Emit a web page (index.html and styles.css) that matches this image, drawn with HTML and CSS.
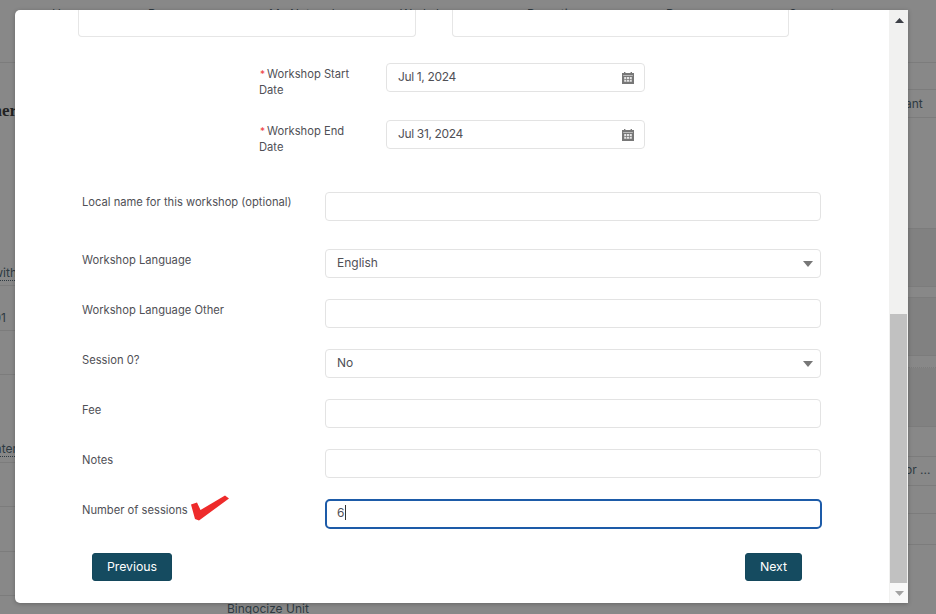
FILE: index.html
```html
<!DOCTYPE html>
<html lang="en">
<head>
<meta charset="utf-8">
<title>Workshop form</title>
<link rel="stylesheet" href="styles.css">
</head>
<body>
<div class="page">
  <nav class="nav">
    <span>Home</span><span>Programs</span><span>My Network</span><span>Workshops</span><span>Reporting</span><span>Resources</span><span>Support</span>
  </nav>
  <div class="under">
    <div class="col-left">
      <div class="l1"><span class="heading">Partner</span></div>
      <div class="l2"><span class="dotted">with</span></div>
      <div class="l3"><span>01</span></div>
      <div class="l4"></div>
      <div class="l5"><span class="dotted">nter</span></div>
      <div class="l6"></div>
      <div class="l7"></div>
      <div class="l8"></div>
    </div>
    <div class="col-mid"><span>Bingocize Unit</span></div>
    <div class="col-right">
      <div class="r1"></div>
      <div class="r2"><span>ant</span></div>
      <div class="r3"></div>
      <div class="r4 dark"></div>
      <div class="r5"></div>
      <div class="r6 dark"></div>
      <div class="r7"></div>
      <div class="r8 dark"></div>
      <div class="r9"></div>
      <div class="r10"><span>or ...</span></div>
      <div class="r11"></div>
      <div class="r12"></div>
    </div>
  </div>
</div>

<div class="modal">
  <div class="modal-body">
    <div class="top-boxes"><div class="box"></div><div class="box"></div></div>

    <div class="date-row first">
      <div class="date-label"><span class="req">*</span>Workshop Start Date</div>
      <div class="field date"><span>Jul 1, 2024</span>
        <svg class="cal" viewBox="0 0 12 12" width="12" height="12"><path fill="#777" d="M2 0h1.400v1H8.600V0H10v1h2v11H0V1h2z"/><path fill="#fff" d="M1.200 3.400h9.600v.5H1.200z"/><path fill="#e4e4e4" d="M2.200 5h7.600v4.800H2.200z"/><path fill="#777" d="M4.200 5h.7v4.800h-.7zM7 5h.7v4.800H7zM2.200 7.100h7.600v.7H2.200z"/></svg>
      </div>
    </div>
    <div class="date-row">
      <div class="date-label"><span class="req">*</span>Workshop End Date</div>
      <div class="field date"><span>Jul 31, 2024</span>
        <svg class="cal" viewBox="0 0 12 12" width="12" height="12"><path fill="#777" d="M2 0h1.400v1H8.600V0H10v1h2v11H0V1h2z"/><path fill="#fff" d="M1.200 3.400h9.600v.5H1.200z"/><path fill="#e4e4e4" d="M2.200 5h7.600v4.800H2.200z"/><path fill="#777" d="M4.200 5h.7v4.800h-.7zM7 5h.7v4.800H7zM2.200 7.100h7.600v.7H2.200z"/></svg>
      </div>
    </div>

    <div class="form-row local"><label>Local name for this workshop (optional)</label><div class="field"></div></div>
    <div class="form-row lang"><label>Workshop Language</label><div class="field"><span>English</span><svg class="arrow" viewBox="0 0 10 6" width="10" height="6"><path fill="#777" d="M0 0h10L5 6z"/></svg></div></div>
    <div class="form-row"><label>Workshop Language Other</label><div class="field"></div></div>
    <div class="form-row"><label>Session 0?</label><div class="field"><span>No</span><svg class="arrow" viewBox="0 0 10 6" width="10" height="6"><path fill="#777" d="M0 0h10L5 6z"/></svg></div></div>
    <div class="form-row"><label>Fee</label><div class="field"></div></div>
    <div class="form-row"><label>Notes</label><div class="field"></div></div>
    <div class="form-row"><label class="check-label">Number of sessions<svg class="check" viewBox="0 0 40 28" width="40" height="28"><path fill="#ee2b2b" d="M1 9.500 7 7.500 10.500 15 35 .5 39 3.500 9 25.500 5 24z"/></svg></label><div class="field focus"><span class="caret">6</span></div></div>

    <div class="actions"><button class="btn prev" type="button">Previous</button><button class="btn next" type="button">Next</button></div>
  </div>
  <div class="scrollbar">
    <div class="sb-btn up"><svg viewBox="0 0 9 5" width="9" height="5"><path fill="#3c3f46" d="M4.500 0 9 5H0z"/></svg></div>
    <div class="sb-space"></div>
    <div class="sb-thumb"></div>
    <div class="sb-btn down"><svg viewBox="0 0 9 5" width="9" height="5"><path fill="#a3a3a3" d="M0 0h9L4.500 5z"/></svg></div>
  </div>
</div>
</body>
</html>
```

FILE: styles.css
```css
* { box-sizing: border-box; }
html, body { margin: 0; height: 100%; overflow: hidden; }
body { font-family: Inter, "Liberation Sans", sans-serif; background: #888888; color: #3f3f46; }

.page { display: flex; flex-direction: column; height: 614px; color: #2e3a42; font-size: 12px; }
.nav { display: grid; grid-template-columns: 96px 121px 131px 127px 139px 123px 1fr; height: 63px; padding: 6px 0 0 52px; line-height: 16px; border-bottom: 1px solid #7c7c7c; white-space: nowrap; }
.under { display: flex; flex: 1; min-height: 0; }
.col-left { width: 30px; display: flex; flex-direction: column; }
.col-left > div { display: flex; justify-content: flex-end; align-items: center; border-bottom: 1px solid #7c7c7c; white-space: nowrap; padding-right: 13px; }
.col-left .l1 { align-items: flex-start; padding-top: 38px; border-bottom: 0; height: 190px; }
.col-left .l2 { height: 33px; align-items: flex-end; padding-bottom: 4px; }
.col-left .l3 { height: 45px; padding: 18px 24px 0 0; }
.col-left .l4 { height: 44px; }
.col-left .l5 { height: 88px; align-items: flex-end; padding-bottom: 5px; }
.col-left .l6 { height: 44px; }
.col-left .l7 { height: 45px; }
.col-left .l8 { height: 44px; }
.heading { font-family: "Liberation Serif", serif; font-weight: 700; font-size: 17px; color: #222; }
.dotted { border-bottom: 1px dotted #2e3a42; }
.col-mid { flex: 1; display: flex; align-items: flex-end; padding-left: 197px; line-height: 12px; }
.col-mid span { position: relative; top: 1px; }
.col-right { width: 28px; display: flex; flex-direction: column; }
.col-right > div { flex: none; border-bottom: 1px solid #7c7c7c; display: flex; align-items: center; white-space: nowrap; }
.col-right span { margin-left: -3px; }
.r1 { height: 27px; }
.r2 { height: 28px; }
.r3 { height: 111px; }
.r4 { height: 58px; }
.r5 { height: 11px; }
.r6 { height: 58px; }
.r7 { height: 12px; border-bottom-style: dotted !important; }
.r8 { height: 59px; }
.r9 { height: 30px; }
.r10 { height: 29px; padding-bottom: 4px; }
.r11 { height: 28px; }
.r12 { height: 31px; }
.dark { background: #818181; }

.modal { position: absolute; left: 15px; top: 10px; width: 893px; height: 593px; display: flex; background: #fff; border-radius: 5px 0 0 5px; box-shadow: 0 1px 4px rgba(0,0,0,.25); overflow: hidden; }
.modal-body { flex: 1; min-width: 0; display: flex; flex-direction: column; color: #505056; }

.top-boxes { display: flex; gap: 36px; padding-left: 63px; }
.box { width: 338px; height: 27px; border: 1px solid #e6e6e6; border-top: 0; border-radius: 0 0 4px 4px; }
.box + .box { width: 337px; }

.field { display: flex; align-items: center; justify-content: space-between; height: 29px; padding: 0 7px 0 11px; border: 1px solid #e3e3e3; border-radius: 4px; font-size: 12px; line-height: 16px; }
.field > span { margin-bottom: 2px; }
.date-row { display: flex; padding-left: 244px; margin-top: 28px; }
.date-row.first { margin-top: 26px; }
.date-label { width: 127px; padding: 3px 24px 0 0; font-size: 11.200px; line-height: 16px; height: 29px; }
.req { color: #ee4040; font-size: 10px; margin: 0 2px 0 1px; }
.date { width: 259px; padding-right: 10px; letter-spacing: -.35px; }

.form-row { display: grid; grid-template-columns: 243px 496px; padding-left: 67px; margin-top: 21px; }
.form-row.local { margin-top: 43px; }
.form-row.lang { margin-top: 28px; }
.form-row label { font-size: 11.200px; line-height: 16px; padding-top: 3px; white-space: nowrap; }
.form-row.local label { padding-top: 2px; }
.check-label { display: flex; align-items: flex-start; }
.check { flex: none; margin: -7px 0 0 2px; }
.field.focus { height: 30px; border: 2px solid #1d5ba8; border-radius: 5px; padding-left: 10px; width: 497px; }
.field.focus > .caret { margin-bottom: 3px; }
.caret { display: inline-block; border-right: 1px solid #333; padding-right: 1px; line-height: 15px; }

.actions { display: flex; justify-content: space-between; padding: 0 87px 0 77px; margin-top: 24px; }
.btn { height: 28px; border: 1px solid #14485c; border-radius: 3px; background: #154b60; color: #fff; font: 400 12.300px Inter, "Liberation Sans", sans-serif; padding: 0 0 2px; }
.prev { width: 80px; }
.next { width: 57px; }

.scrollbar { flex: none; width: 19px; display: flex; flex-direction: column; background: #f1f1f0; padding-left: 1px; }
.sb-btn { display: flex; justify-content: center; align-items: center; height: 20px; flex: none; }
.sb-btn.down { background: #f8f8f8; }
.sb-space { flex: 1; }
.sb-thumb { flex: none; height: 269px; margin-right: 1px; background: #c1c1c1; }
```
